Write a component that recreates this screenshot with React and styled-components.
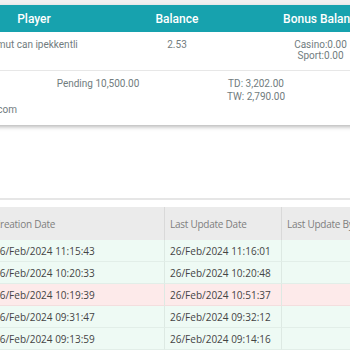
import React from 'react';
import styled, { createGlobalStyle } from 'styled-components';

const Global = createGlobalStyle`
  html, body { margin: 0; padding: 0; background: #fff; overflow: hidden; }
  body { font-family: Roboto, "Open Sans", sans-serif; }
`;

const Page = styled.div`
  width: 350px;
  height: 350px;
  overflow: hidden;
  background: #fff;
`;

const TopStrip = styled.div`
  height: 5px;
  background: #f0f0f0;
`;

const Card = styled.section`
  margin-left: -40px;
  width: 440px;
  background: #fff;
  box-shadow: 0 2px 4px rgba(0, 0, 0, 0.28);
`;

const Grid = styled.div`
  display: grid;
  grid-template-columns: ${(p) => p.$cols};
`;

const HeadRow = styled(Grid)`
  height: 27px;
  align-items: center;
  background: #17a2ae;
  color: #fff;
  font: 500 12px Roboto, sans-serif;
`;

const HeadCell = styled.div`
  text-align: center;
  white-space: nowrap;
`;

const ValueRow = styled(Grid)`
  padding: ${(p) => p.$pad};
  border-bottom: ${(p) => (p.$last ? 'none' : '1px solid #e7e7e7')};
  font: 400 10px Roboto, sans-serif;
  line-height: 11px;
  color: #717c7e;
`;

const Cell = styled.div`
  text-align: center;
  white-space: nowrap;
  padding-left: ${(p) => p.$pl || 0}px;
  padding-right: ${(p) => p.$pr || 0}px;
  line-height: ${(p) => p.$lh || 11}px;
`;

const EmailLine = styled.div`
  width: 57px;
  display: flex;
  justify-content: flex-end;
  white-space: nowrap;
  margin-top: 1px;
  font: 400 10px Roboto, sans-serif;
  line-height: 12px;
  color: #717c7e;
`;

const Divider = styled.div`
  margin-top: 73px;
  height: 2px;
  background: #e6e6e6;
`;

const Table = styled.div`
  margin-top: 7px;
  margin-left: -11px;
  display: grid;
  grid-template-columns: 176px 117px 1fr;
  width: 420px;
`;

const TH = styled.div`
  height: 33px;
  display: flex;
  align-items: center;
  padding-left: 5px;
  background: #ebebeb;
  border-right: 1px solid #d9d9d9;
  font: 400 10px "Open Sans", sans-serif;
  letter-spacing: -0.25px;
  color: #7e7e7e;
  white-space: nowrap;
`;

const TD = styled.div`
  height: 21px;
  display: flex;
  align-items: center;
  padding-left: 5px;
  background: ${(p) => (p.$warn ? '#fdeaea' : '#eefaf4')};
  border-bottom: 1px solid ${(p) => (p.$warn ? '#f3dede' : '#e2eee8')};
  border-right: 1px solid #dde9e3;
  font: 400 10px "Open Sans", sans-serif;
  color: #444;
  white-space: nowrap;
`;

const rows = [
  ['26/Feb/2024 11:15:43', '26/Feb/2024 11:16:01', false],
  ['26/Feb/2024 10:20:33', '26/Feb/2024 10:20:48', false],
  ['26/Feb/2024 10:19:39', '26/Feb/2024 10:51:37', true],
  ['26/Feb/2024 09:31:47', '26/Feb/2024 09:32:12', false],
  ['26/Feb/2024 09:13:59', '26/Feb/2024 09:14:16', false],
];

export default function App() {
  return (
    <Page>
      <Global />
      <TopStrip />
      <Card>
        <HeadRow $cols="148px 138px 154px">
          <HeadCell>Player</HeadCell>
          <HeadCell>Balance</HeadCell>
          <HeadCell>Bonus Balance</HeadCell>
        </HeadRow>
        <ValueRow $cols="148px 138px 154px" $pad="7px 0 9px">
          <Cell $lh={12}>Umut can ipekkentli</Cell>
          <Cell $lh={12}>2.53</Cell>
          <Cell $pr={5}>
            <div>Casino:0.00</div>
            <div>Sport:0.00</div>
          </Cell>
        </ValueRow>
        <ValueRow $cols="256px 80px" $pad="6px 0 9px" $last>
          <Cell $pl={20} $lh={13}>Pending 10,500.00</Cell>
          <Cell $lh={13}>
            <div>TD: 3,202.00</div>
            <div>TW: 2,790.00</div>
          </Cell>
          <EmailLine>umutcanipekkentli@hotmail.com</EmailLine>
        </ValueRow>
      </Card>
      <Divider />
      <Table>
        <TH>Creation Date</TH>
        <TH>Last Update Date</TH>
        <TH>Last Update By</TH>
        {rows.map(([a, b, warn], i) => (
          <React.Fragment key={i}>
            <TD $warn={warn}>{a}</TD>
            <TD $warn={warn}>{b}</TD>
            <TD $warn={warn} />
          </React.Fragment>
        ))}
      </Table>
    </Page>
  );
}
